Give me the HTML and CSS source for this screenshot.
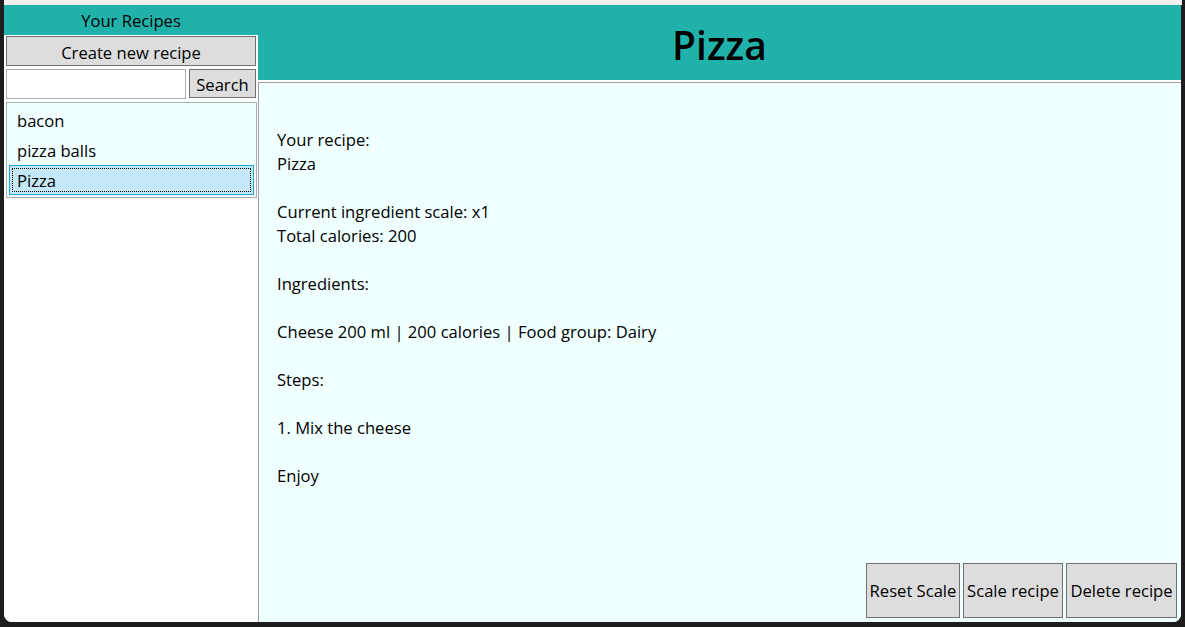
FILE: index.html
```html
<!DOCTYPE html>
<html lang="en">
<head>
<meta charset="utf-8">
<title>Recipes</title>
<link rel="stylesheet" href="styles.css">
</head>
<body>
<div class="top-strip"></div>
<div class="window">
  <aside class="sidebar">
    <div class="sidebar-header">Your Recipes</div>
    <div class="sidebar-body">
      <button class="btn btn-create">Create new recipe</button>
      <div class="search-row">
        <input class="search-input" type="text" value="">
        <button class="btn btn-search">Search</button>
      </div>
      <ul class="recipe-list">
        <li class="recipe-item">bacon</li>
        <li class="recipe-item">pizza balls</li>
        <li class="recipe-item selected"><span class="focus-rect">Pizza</span></li>
      </ul>
    </div>
  </aside>
  <main class="main">
    <header class="main-header"><h1 class="title">Pizza</h1></header>
    <section class="content">
      <div class="details">
        <p>Your recipe:<br>Pizza</p>
        <p>Current ingredient scale: x1<br>Total calories: 200</p>
        <p>Ingredients:</p>
        <p>Cheese 200 ml | 200 calories | Food group: Dairy</p>
        <p>Steps:</p>
        <p>1. Mix the cheese</p>
        <p>Enjoy</p>
      </div>
      <div class="actions">
        <button class="btn btn-action btn-reset">Reset Scale</button>
        <button class="btn btn-action btn-scale">Scale recipe</button>
        <button class="btn btn-action btn-delete">Delete recipe</button>
      </div>
    </section>
  </main>
</div>
</body>
</html>
```

FILE: styles.css
```css
* { box-sizing: border-box; }

html, body {
  margin: 0;
  padding: 0;
  width: 1185px;
  height: 627px;
  overflow: hidden;
  background: #1d1d1d;
  font-family: "Open Sans", "Noto Sans", sans-serif;
  font-size: 16.6px;
  color: #000;
}

.top-strip {
  height: 5px;
  margin: 0 3px 0 4px;
  background: #f3f0ef;
}

.window {
  margin: 0 4px 0 4px;
  height: 617px;
  display: grid;
  grid-template-columns: 254px 1fr;
  background: #fff;
  border-radius: 0 0 8px 8px;
  overflow: hidden;
}

/* Sidebar */
.sidebar {
  display: flex;
  flex-direction: column;
  background: #fff;
}

.sidebar-header {
  height: 30px;
  line-height: 28px;
  padding-top: 2px;
  text-align: center;
  background: #20b2aa;
}

.sidebar-body {
  display: flex;
  flex-direction: column;
  gap: 3px;
  padding: 1px 1px 0 2px;
  background: #fff;
}

.btn {
  font-family: inherit;
  font-size: 16.6px;
  color: #000;
  background: #dddddd;
  border: 1px solid #707070;
  border-radius: 0;
  padding: 2px 0 0 0;
  margin: 0;
  white-space: nowrap;
}

.btn-create {
  height: 30px;
  width: 250px;
}

.search-row {
  display: flex;
  gap: 3px;
  height: 30px;
}

.search-input {
  width: 180px;
  height: 30px;
  border: 1px solid #abadb3;
  background: #fff;
  margin: 0;
  padding: 0 3px;
  font-family: inherit;
  font-size: 16.6px;
}

.btn-search {
  width: 67px;
  height: 29px;
}

.recipe-list {
  list-style: none;
  margin: 0;
  width: 251px;
  padding: 2px;
  background: #f0ffff;
  border: 1px solid #abadb3;
}

.recipe-item {
  height: 30px;
  line-height: 26px;
  padding: 2px 7px 0 7px;
  border: 1px solid transparent;
}

.recipe-item.selected {
  background: #c4e8f7;
  border-color: #26a0da;
  padding: 2px;
}

.focus-rect {
  display: block;
  height: 24px;
  line-height: 22px;
  padding: 1px 4px 0 4px;
  border: 1px dotted #000;
}

/* Main */
.main {
  display: flex;
  flex-direction: column;
  min-height: 0;
}

.main-header {
  height: 75px;
  background: #20b2aa;
  display: flex;
  align-items: center;
  justify-content: center;
  margin-bottom: 2px;
}

.title {
  margin: 0;
  font-size: 39px;
  font-weight: 600;
  line-height: 1;
  padding-top: 4px;
}

.content {
  flex: 1;
  display: flex;
  flex-direction: column;
  justify-content: space-between;
  background: #f0ffff;
  border-top: 1px solid #a0a0a0;
  border-left: 1px solid #a0a0a0;
  padding: 45px 4px 4px 18px;
}

.details p {
  margin: 0 0 24px 0;
  line-height: 24px;
}

.details p:last-child { margin-bottom: 0; }

.actions {
  display: flex;
  justify-content: flex-end;
  gap: 3px;
}

.btn-action {
  height: 55px;
  padding: 0;
}

.btn-reset { width: 94px; }
.btn-scale { width: 100px; }
.btn-delete { width: 111px; }
```
